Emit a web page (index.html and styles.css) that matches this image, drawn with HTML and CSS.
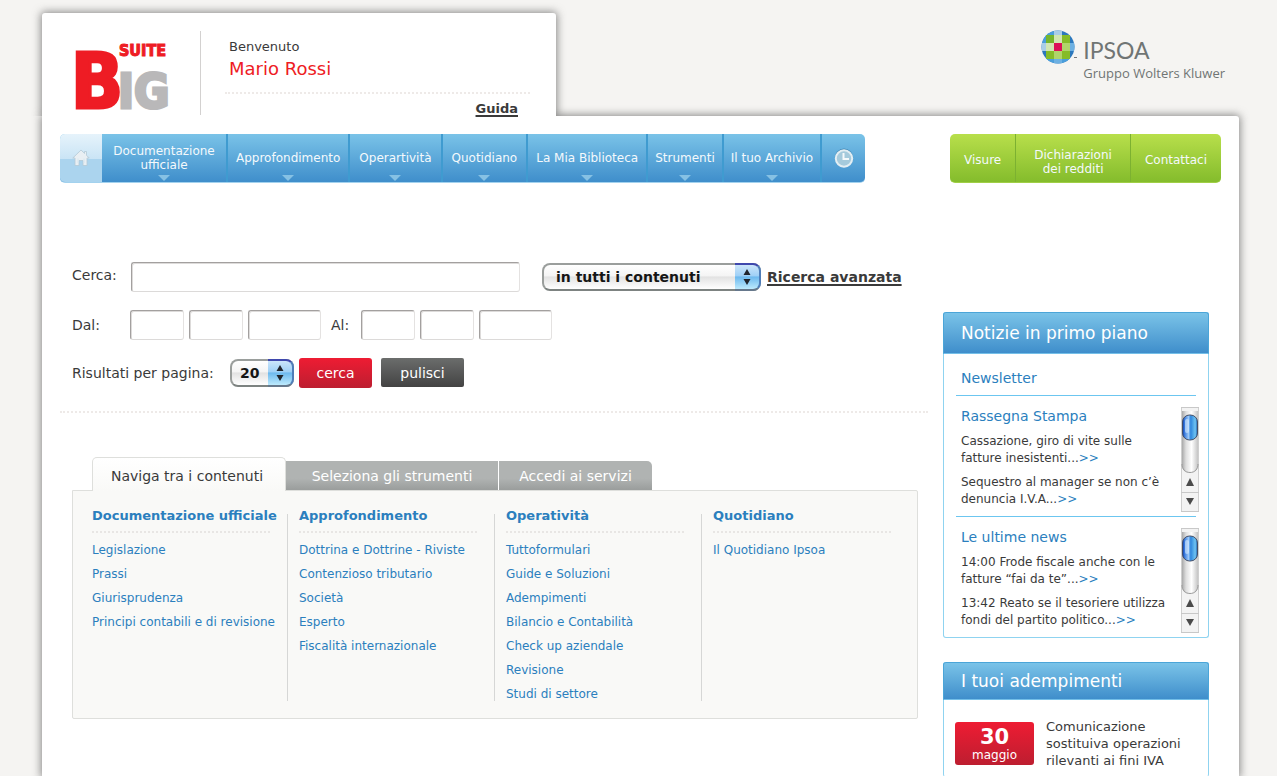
FILE: index.html
```html
<!DOCTYPE html>
<html lang="it">
<head>
<meta charset="utf-8">
<meta name="viewport" content="width=device-width, initial-scale=1">
<title>BIG Suite</title>
<link rel="stylesheet" href="styles.css">
</head>
<body>
<svg width="0" height="0" class="defs" aria-hidden="true">
  <defs>
    <linearGradient id="track" x1="0" x2="1" y1="0" y2="0">
      <stop offset="0" stop-color="#a9a9a9"/><stop offset=".25" stop-color="#dedede"/><stop offset=".6" stop-color="#ffffff"/><stop offset="1" stop-color="#c4c4c4"/>
    </linearGradient>
    <linearGradient id="thumb" x1="0" x2="1" y1="0" y2="0">
      <stop offset="0" stop-color="#0b3cae"/><stop offset=".15" stop-color="#3d7fe0"/><stop offset=".4" stop-color="#9cc8f7"/><stop offset=".55" stop-color="#2f86dd"/><stop offset=".85" stop-color="#6fc4f2"/><stop offset="1" stop-color="#1c5fb5"/>
    </linearGradient>
    <symbol id="scroller" viewBox="0 0 18 105">
      <rect width="18" height="105" fill="#f3f3f3"/>
      <path d="M.5 0V105M17.5 0V105" stroke="#cfcfcf"/>
      <path d="M0 .5H18M0 85.500H18M0 104.500H18" stroke="#c8c8c8"/>
      <path d="M1 4H17V57Q17 66 9 66T1 57Z" fill="url(#track)"/>
      <path d="M1 57C1 62 4 65.500 9 65.500S17 62 17 57" fill="none" stroke="#9a9a9a"/>
      <rect x="1.500" y="8" width="15" height="25" rx="7" fill="url(#thumb)" stroke="#454f66"/>
      <rect x="4" y="12" width="4" height="14" rx="2" fill="#d8edff" opacity=".6"/>
      <path d="M9 71L13 79H5Z" fill="#4a4a4a"/>
      <path d="M9 98L13 91H5Z" fill="#4a4a4a"/>
    </symbol>
    <symbol id="steppers" viewBox="0 0 10 18">
      <path d="M5 1L8.500 7H1.500ZM5 17L8.500 11H1.500Z" fill="#20242c"/>
    </symbol>
  </defs>
</svg>
<div class="page">
  <header class="top">
    <div class="top-card">
      <svg class="logo" width="90" height="74" viewBox="0 0 90 74" role="img" aria-label="BIG Suite">
        <g font-family="DejaVu Sans Condensed, sans-serif" font-weight="bold">
          <text x="-6" y="69" font-size="76" fill="#ee1c24" stroke="#ee1c24" stroke-width="3">B</text>
          <text x="41" y="69" font-size="48" fill="#b9b8b9" stroke="#b9b8b9" stroke-width="3">IG</text>
          <text x="42" y="17" font-size="16" fill="#ee1c24" stroke="#ee1c24">SUITE</text>
        </g>
      </svg>
      <div class="welcome">
        <p class="hello">Benvenuto</p>
        <p class="user">Mario Rossi</p>
        <a class="guide" href="#">Guida</a>
      </div>
    </div>
    <a class="brand" href="#">
      <svg class="globe" width="38" height="34" viewBox="0 0 38 34" aria-hidden="true">
        <clipPath id="ball"><circle cx="17" cy="17" r="16.500"/></clipPath>
        <g clip-path="url(#ball)">
          <rect width="34" height="34" fill="#2c78bd"/>
          <path d="M5 0H13V5H5ZM0 5H5V13H0ZM21 29H29V34H21ZM5 29H13V34H5Z" fill="#4a9edb"/>
          <path d="M13 0H21V5H13ZM0 13H5V21H0Z" fill="#a9cde8"/>
          <path d="M29 13H34V21H29ZM13 29H21V34H13Z" fill="#6db0e2"/>
          <rect x="5" y="5" width="24" height="24" fill="#85bc28"/>
          <path d="M5 5H13V13H5Z" fill="#74b52d"/>
          <path d="M13 5H21V13H13ZM5 13H13V21H5Z" fill="#d2e6b2"/>
          <path d="M21 13H29V21H21ZM13 21H21V29H13Z" fill="#b0d46a"/>
          <rect x="13" y="13" width="8" height="8" fill="#dc0f56"/>
        </g>
        <path d="M33 27.500H36" stroke="#777" stroke-width="1"/>
      </svg>
      <span class="brand-text"><span class="brand-name">IPSOA</span><span class="brand-group">Gruppo Wolters Kluwer</span></span>
    </a>
  </header>

  <main class="sheet">
    <div class="bars">
      <nav class="menu" aria-label="Principale">
        <a class="home" href="#" aria-label="Home">
          <svg width="18" height="18" viewBox="0 0 18 18" aria-hidden="true"><path d="M9 1L.8 9H3V16.500H7V11.500H11V16.500H15V9H17.200L14.500 6.300V2.500H12.500V4.400Z" fill="#e9eff3" stroke="#b4c9d6" stroke-width=".8"/><path d="M6 9.500V14M12 9.500V14" fill="none" stroke="#d6e6ef"/></svg>
        </a>
        <a class="item w-doc" href="#">Documentazione ufficiale</a>
        <a class="item mid" href="#">Approfondimento</a>
        <a class="item wide" href="#">Operartività</a>
        <a class="item wide" href="#">Quotidiano</a>
        <a class="item mid" href="#">La Mia Biblioteca</a>
        <a class="item" href="#">Strumenti</a>
        <a class="item" href="#">Il tuo Archivio</a>
        <a class="clock" href="#" aria-label="Cronologia">
          <svg width="20" height="20" viewBox="0 0 20 20" aria-hidden="true"><circle cx="10" cy="9.500" r="9" fill="#3f86b4"/><circle cx="10" cy="10.500" r="8.200" fill="#a5cadc" stroke="#e3eef3" stroke-width="2"/><path d="M9.500 5V11H15" fill="none" stroke="#f4f9fb" stroke-width="2"/></svg>
        </a>
      </nav>
      <nav class="menu green" aria-label="Servizi">
        <a class="item" href="#">Visure</a>
        <a class="item two" href="#">Dichiarazioni<br>dei redditi</a>
        <a class="item" href="#">Contattaci</a>
      </nav>
    </div>

    <div class="columns">
      <div class="content">
        <form class="search">
          <div class="row">
            <label class="lead" for="q">Cerca:</label>
            <input class="field long" id="q" type="text">
            <span class="pick scope">
              <select id="scope" aria-label="Ambito"><option>in tutti i contenuti</option></select>
              <span class="cap"><svg width="10" height="18" aria-hidden="true"><use href="#steppers"/></svg></span>
            </span>
            <a class="advanced" href="#">Ricerca avanzata</a>
          </div>
          <div class="row dates">
            <label class="lead" for="d1">Dal:</label>
            <input class="field" id="d1" type="text" aria-label="Dal, giorno">
            <input class="field" type="text" aria-label="Dal, mese">
            <input class="field year" type="text" aria-label="Dal, anno">
            <label class="to" for="a1">Al:</label>
            <input class="field" id="a1" type="text" aria-label="Al, giorno">
            <input class="field" type="text" aria-label="Al, mese">
            <input class="field year" type="text" aria-label="Al, anno">
          </div>
          <div class="row actions">
            <label class="per-page" for="n">Risultati per pagina:</label>
            <span class="pick count">
              <select id="n"><option>20</option></select>
              <span class="cap"><svg width="10" height="18" aria-hidden="true"><use href="#steppers"/></svg></span>
            </span>
            <button class="btn primary" type="button">cerca</button>
            <button class="btn dark" type="reset">pulisci</button>
          </div>
        </form>

        <section class="browse">
          <div class="tabs" role="tablist">
            <button class="tab active" role="tab" aria-selected="true" type="button">Naviga tra i contenuti</button>
            <button class="tab" role="tab" aria-selected="false" type="button">Seleziona gli strumenti</button>
            <button class="tab last" role="tab" aria-selected="false" type="button">Accedi ai servizi</button>
          </div>
          <div class="panel" role="tabpanel">
            <div class="group">
              <h2>Documentazione ufficiale</h2>
              <ul>
                <li><a href="#">Legislazione</a></li>
                <li><a href="#">Prassi</a></li>
                <li><a href="#">Giurisprudenza</a></li>
                <li><a href="#">Principi contabili e di revisione</a></li>
              </ul>
            </div>
            <div class="group">
              <h2>Approfondimento</h2>
              <ul>
                <li><a href="#">Dottrina e Dottrine - Riviste</a></li>
                <li><a href="#">Contenzioso tributario</a></li>
                <li><a href="#">Società</a></li>
                <li><a href="#">Esperto</a></li>
                <li><a href="#">Fiscalità internazionale</a></li>
              </ul>
            </div>
            <div class="group">
              <h2>Operatività</h2>
              <ul>
                <li><a href="#">Tuttoformulari</a></li>
                <li><a href="#">Guide e Soluzioni</a></li>
                <li><a href="#">Adempimenti</a></li>
                <li><a href="#">Bilancio e Contabilità</a></li>
                <li><a href="#">Check up aziendale</a></li>
                <li><a href="#">Revisione</a></li>
                <li><a href="#">Studi di settore</a></li>
              </ul>
            </div>
            <div class="group">
              <h2>Quotidiano</h2>
              <ul>
                <li><a href="#">Il Quotidiano Ipsoa</a></li>
              </ul>
            </div>
          </div>
        </section>
      </div>

      <aside class="side">
        <section class="box">
          <h2 class="box-title tall">Notizie in primo piano</h2>
          <div class="box-body">
            <h3 class="newsletter"><a href="#">Newsletter</a></h3>
            <div class="news">
              <div class="news-text">
                <h3>Rassegna Stampa</h3>
                <p>Cassazione, giro di vite sulle<br>fatture inesistenti...<a href="#">&gt;&gt;</a></p>
                <p>Sequestro al manager se non c’è<br>denuncia I.V.A...<a href="#">&gt;&gt;</a></p>
              </div>
              <svg class="scroller" width="18" height="105" aria-hidden="true"><use href="#scroller"/></svg>
            </div>
            <div class="news">
              <div class="news-text">
                <h3>Le ultime news</h3>
                <p>14:00 Frode fiscale anche con le<br>fatture “fai da te”...<a href="#">&gt;&gt;</a></p>
                <p>13:42 Reato se il tesoriere utilizza<br>fondi del partito politico...<a href="#">&gt;&gt;</a></p>
              </div>
              <svg class="scroller" width="18" height="105" aria-hidden="true"><use href="#scroller"/></svg>
            </div>
          </div>
        </section>
        <section class="box open">
          <h2 class="box-title">I tuoi adempimenti</h2>
          <div class="deadline">
            <time class="date"><b>30</b>maggio</time>
            <p>Comunicazione<br>sostituiva operazioni<br>rilevanti ai fini IVA</p>
          </div>
        </section>
      </aside>
    </div>
  </main>
</div>
</body>
</html>
```
FILE: styles.css
```css
* { box-sizing: border-box; }
body {
  margin: 0;
  background: #f5f4f2;
  color: #3a3a3a;
  font-family: "DejaVu Sans", Verdana, sans-serif;
  font-size: 12px;
}
h2, h3, p, ul { margin: 0; padding: 0; font-weight: normal; }
ul { list-style: none; }
a { color: #2b7fbe; text-decoration: none; }
.defs { position: absolute; }

.page {
  min-height: 100vh;
  display: flex;
  flex-direction: column;
  padding: 13px 38px 0 42px;
}

/* header */
.top { display: flex; justify-content: space-between; }
.top-card {
  position: relative;
  z-index: 1;
  flex: 0 0 514px;
  height: 103px;
  display: flex;
  padding: 18px 26px 0 35px;
}
.top-card::before {
  content: "";
  position: absolute;
  z-index: -1;
  inset: 0;
  background: #fff;
  border-radius: 3px 3px 0 0;
  box-shadow: 0 0 8px 1px rgba(60, 60, 60, .6);
  clip-path: inset(-20px -20px 0 -20px);
}
.logo { margin-top: 8px; overflow: visible; }
.welcome {
  flex: 1;
  display: flex;
  flex-direction: column;
  height: 84px;
  margin-left: 33px;
  padding-left: 24px;
  border-left: 1px solid #d3d1d0;
}
.hello { padding: 6px 0 0 4px; font-size: 13px; line-height: 20px; }
.user { padding: 0 0 11px 4px; font-size: 18px; line-height: 24px; color: #ee1c24; border-bottom: 2px dotted #eeeae8; }
.guide {
  align-self: flex-end;
  margin: 6px 12px 0 0;
  font-size: 13px;
  font-weight: bold;
  line-height: 18px;
  color: #3a3a3a;
  text-decoration: underline;
  text-underline-offset: 2px;
  text-decoration-thickness: 2px;
}
.brand { display: flex; align-items: flex-start; padding: 17px 14px 0 0; color: #707574; }
.globe { margin-right: 4px; }
.brand-text { display: flex; flex-direction: column; font-family: "Open Sans", "Noto Sans", sans-serif; }
.brand-name { font-family: Lato, sans-serif; font-size: 23px; line-height: 28px; padding-top: 6px; }
.brand-group { font-size: 13px; line-height: 18px; font-weight: 500; }

/* sheet */
.sheet {
  flex: 1;
  display: flex;
  flex-direction: column;
  padding: 18px 18px 0;
  background: #fff;
  border-radius: 0 3px 0 0;
  box-shadow: 0 0 8px 1px rgba(60, 60, 60, .6);
}
.bars { display: flex; justify-content: space-between; }
.menu {
  display: flex;
  height: 49px;
  border-radius: 5px;
  overflow: hidden;
  background: linear-gradient(#7ac3e8, #3f8ecb);
  border-bottom: 1px solid #a3d2ee;
}
.menu a { display: flex; align-items: center; justify-content: center; color: #f4f9fc; text-align: center; line-height: 14px; }
.menu .item { position: relative; padding: 0 7px; border-right: 2px solid #3f9bd0; }
.menu .w-doc { width: 126px; padding: 0 10px; }
.menu .mid { padding: 0 8px; }
.menu .wide { padding: 0 9px; }
.menu .item::after {
  content: "";
  position: absolute;
  left: 50%;
  bottom: 1px;
  margin-left: -6px;
  border: 6px solid transparent;
  border-top-color: #86c1e4;
  border-bottom: 0;
}
.menu .home { width: 42px; background: linear-gradient(#e6f3fb, #c9e4f5 53%, #abd4ee 53%, #abd4ee); }
.menu .clock { width: 43px; }
.menu.green { background: linear-gradient(#b8df4b, #84bc2c); border-bottom-color: #a0cf46; }
.menu.green .item { padding: 3px 14px 0; border-right: 1px solid #7cb131; }
.menu.green .two { padding: 7px 18px 0; }
.menu.green .item:last-child { border-right: 0; }
.menu.green .item::after { display: none; }

.columns { flex: 1; display: grid; grid-template-columns: 1fr 266px; gap: 15px; padding-right: 12px; }

/* search */
.search { padding: 78px 0 23px 12px; border-bottom: 2px dotted #eeeae8; }
.search label { font-size: 14px; white-space: nowrap; }
.row { display: flex; align-items: center; height: 31px; }
.lead { width: 58px; }
.row:first-child .lead { padding-bottom: 4px; }
.field {
  width: 54px;
  height: 30px;
  padding: 0 6px;
  font: 14px "DejaVu Sans", sans-serif;
  background: #fff;
  border: 1px solid #a3a09f;
  border-right-color: #e4e2e1;
  border-bottom-color: #dcdad9;
  border-radius: 3px;
  box-shadow: inset 1px 1px 0 #dddbda;
}
.long { width: 389px; margin: 0 22px 0 1px; }
.dates { gap: 5px; margin-top: 17px; }
.dates .lead { width: 53px; }
.field.year { width: 73px; }
.to { width: 30px; padding-left: 5px; }
.actions { margin-top: 17px; }
.per-page { width: 158px; }
.pick { position: relative; display: inline-flex; height: 28px; }
.pick select {
  appearance: none;
  width: 100%;
  height: 28px;
  padding: 0 12px;
  font: bold 14px "DejaVu Sans", sans-serif;
  color: #151515;
  background: linear-gradient(#fff, #f4f4f4 45%, #e2e2e2 50%, #fff);
  border: 2px solid #9a9e9c;
  border-bottom-color: #7d8381;
  border-radius: 8px;
}
.cap {
  position: absolute;
  top: 0;
  right: 0;
  width: 26px;
  height: 28px;
  display: flex;
  align-items: center;
  justify-content: center;
  pointer-events: none;
  background: linear-gradient(#cbe5fa, #9fd0f6 45%, #6db9ee 50%, #bdeafd);
  border: 2px solid #4f7db8;
  border-top-color: #3f48ad;
  border-bottom-color: #66788c;
  border-left: 0;
  border-radius: 0 8px 8px 0;
}
.scope { width: 219px; margin-right: 6px; }
.count { width: 64px; margin-right: 5px; }
.count select { padding: 0 8px; }
.advanced { font-size: 14px; font-weight: bold; color: #3a3a3a; text-decoration: underline; text-underline-offset: 2px; text-decoration-thickness: 2px; }
.btn {
  height: 30px;
  margin-right: 9px;
  font: 14px "DejaVu Sans", sans-serif;
  color: #fff;
  border: 0;
  border-radius: 3px;
}
.primary { width: 73px; background: linear-gradient(#ee1c33, #bd1e30); }
.dark { width: 83px; height: 29px; background: linear-gradient(#6b6d6c, #434343); border-radius: 2px; }

/* tabbed browser */
.browse { padding: 44px 10px 0 12px; }
.tabs { display: flex; align-items: flex-end; padding-left: 20px; }
.tab {
  width: 213px;
  height: 29px;
  padding: 0;
  font: 14px "DejaVu Sans", sans-serif;
  color: #fff;
  background: linear-gradient(#b0b3b2 60%, #9a9d9c);
  border: 0;
  border-right: 1px solid #fff;
}
.tab.last { width: 153px; border-right: 0; border-radius: 0 5px 0 0; }
.tab.active {
  position: relative;
  width: 194px;
  height: 34px;
  margin-bottom: -1px;
  padding: 2px 4px 0 0;
  color: #3a3a3a;
  background: linear-gradient(#fff, #f9f9f7);
  border: 1px solid #dedfdc;
  border-bottom: 0;
  border-radius: 5px 5px 0 0;
}
.panel {
  display: grid;
  grid-template-columns: repeat(4, 1fr);
  gap: 11px;
  padding: 23px 8px 17px 19px;
  background: #f9f9f7;
  border: 1px solid #dedfdc;
  border-radius: 0 2px 2px 2px;
}
.group { border-right: 1px solid #d6d7d6; white-space: nowrap; }
.group:last-child { border-right: 0; }
.group h2 { width: 178px; height: 26px; margin-top: -7px; font-size: 13px; font-weight: bold; line-height: 18px; color: #2b7fbe; border-bottom: 2px dotted #e8e6e4; }
.group ul { margin-bottom: -5px; padding-top: 5px; }
.group li { line-height: 24px; }

/* sidebar */
.side { display: flex; flex-direction: column; gap: 24px; padding-top: 129px; }
.box { border: 1px solid #8fd3f0; border-top: 0; border-radius: 3px; }
.box-title {
  margin: 0 -1px;
  padding-left: 17px;
  font-size: 17px;
  line-height: 36px;
  color: #fff;
  background: linear-gradient(#7ac3e8, #3f8ecb);
  border: 1px solid #4ba5d8;
  border-bottom-color: #74bfe8;
  border-radius: 3px 3px 0 0;
}
.box-title.tall { line-height: 40px; }
.box-body { padding: 0 12px; }
.box h3 { font-size: 14px; line-height: 18px; color: #2b7fbe; }
.box .newsletter { padding: 15px 5px 8px; border-bottom: 1px solid #6cc6f0; }
.news { position: relative; padding-left: 5px; border-bottom: 1px solid #6cc6f0; }
.news:last-child { border-bottom: 0; }
.news-text { padding: 11px 0 8px; white-space: nowrap; }
.news p { padding-top: 7px; line-height: 17px; }
.news h3 + p { padding-top: 8px; }
.scroller { position: absolute; top: 11px; right: -3px; }
.open { flex: 1; border-bottom: 0; }
.deadline { display: flex; gap: 12px; padding: 18px 10px 8px 11px; }
.date {
  width: 79px;
  height: 43px;
  margin-top: 4px;
  display: flex;
  flex-direction: column;
  align-items: center;
  font-size: 12px;
  line-height: 13px;
  color: #fff;
  background: linear-gradient(#ee1c33, #bd1e30);
  border-radius: 3px;
}
.date b { padding-top: 3px; font-size: 21px; line-height: 24px; }
.deadline p { font-size: 13px; line-height: 17px; white-space: nowrap; }
```
